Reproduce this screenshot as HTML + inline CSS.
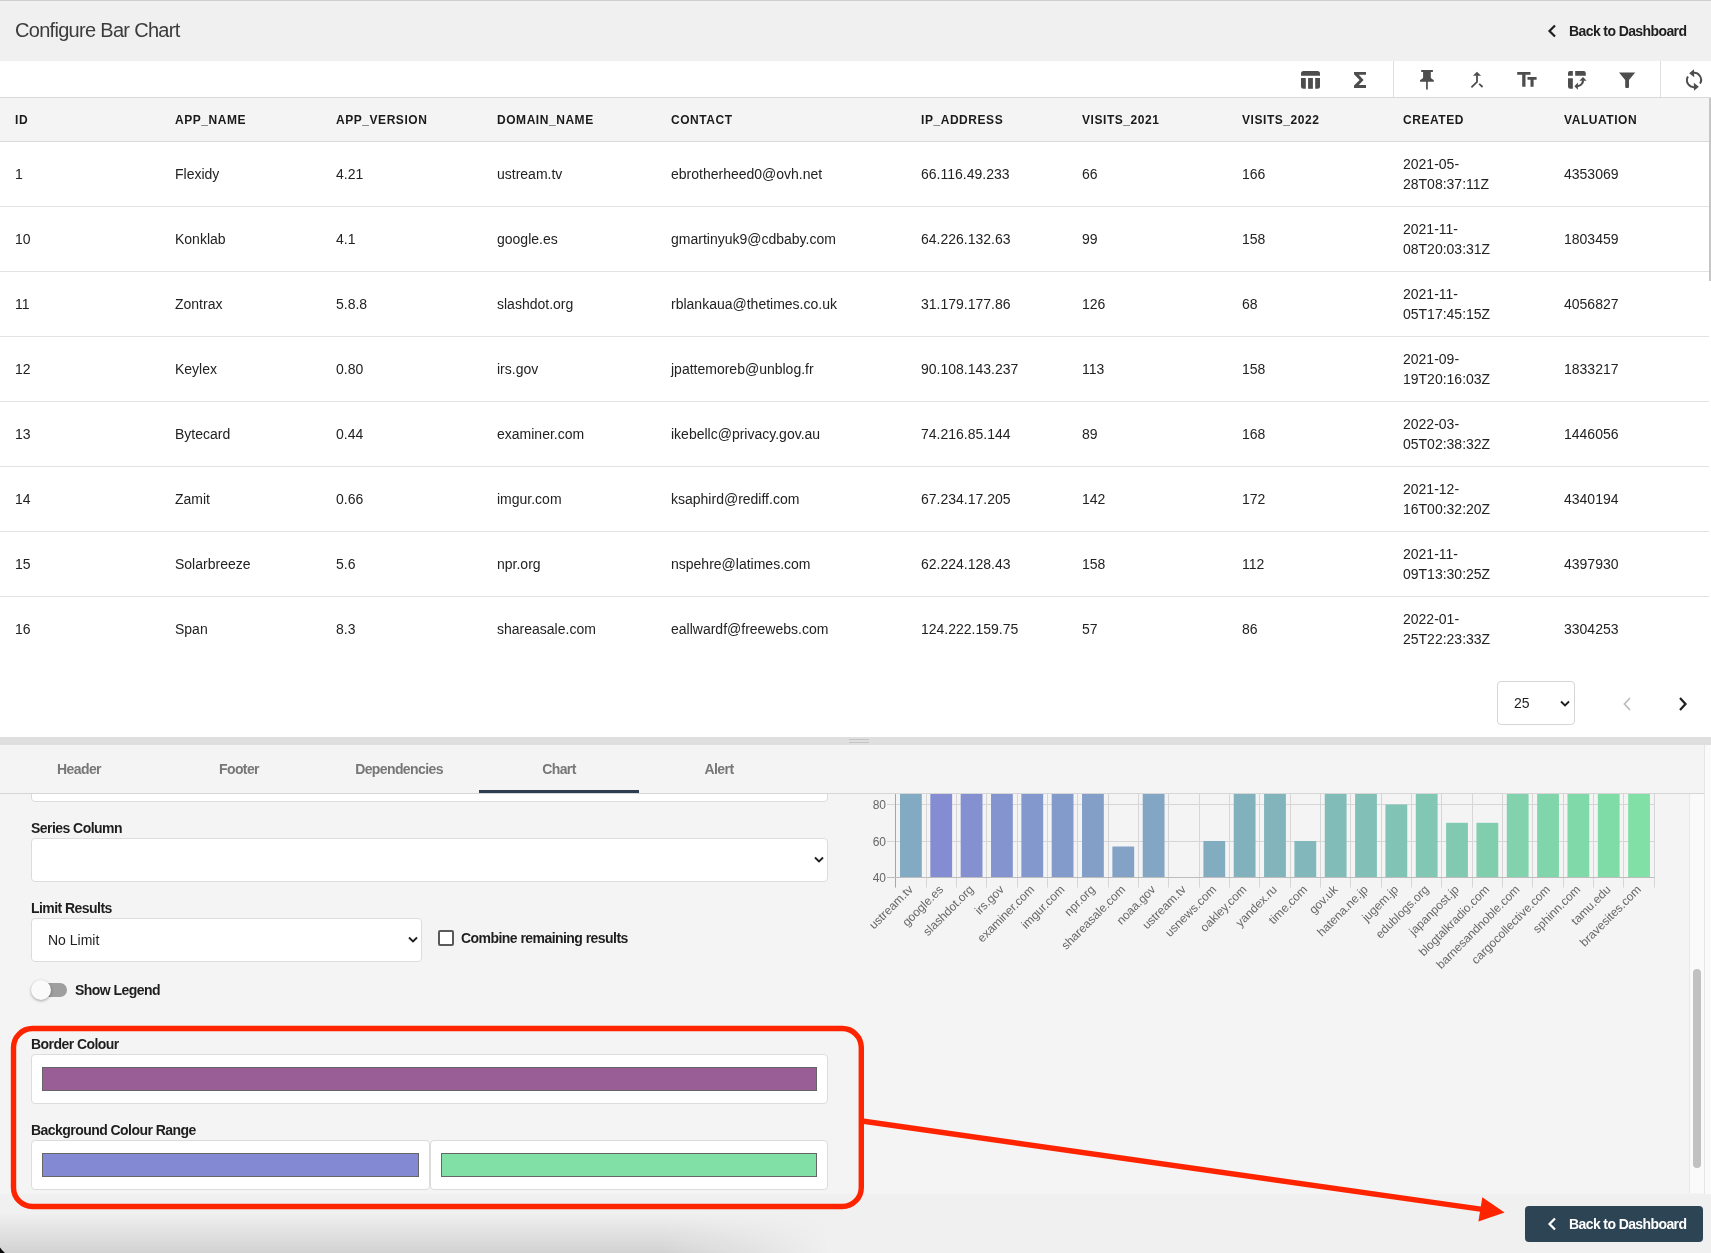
<!DOCTYPE html><html><head><meta charset="utf-8"><style>
*{box-sizing:border-box;margin:0;padding:0}
html,body{width:1711px;height:1253px;overflow:hidden;background:#f0f0f0;font-family:"Liberation Sans",sans-serif;color:#212121}
.a{position:absolute}
.nw{white-space:nowrap}
.th{font-size:12px;font-weight:bold;letter-spacing:0.55px;color:#1a1a1a;white-space:nowrap;line-height:14px}
.td{font-size:14px;color:#222;white-space:nowrap;line-height:20px}
.lbl{font-size:14px;font-weight:bold;letter-spacing:-0.55px;color:#1e1e1e;white-space:nowrap;line-height:16px}
.tab{font-size:14px;font-weight:bold;letter-spacing:-0.6px;color:#777;white-space:nowrap;line-height:16px;text-align:center;width:160px}
.box{background:#fff;border:1px solid #dcdcdc;border-radius:4px}
</style></head><body><div style="position:absolute;left:0;top:0;width:1711px;height:1253px;overflow:hidden;will-change:transform">
<div class="a" style="left:0;top:0;width:1711px;height:1px;background:#cfcfcf"></div>
<div class="a nw" style="left:15px;top:19px;font-size:20px;line-height:22px;letter-spacing:-0.7px;color:#3c3c3c">Configure Bar Chart</div>
<div class="a nw" style="left:1569px;top:23px;font-size:14px;line-height:16px;font-weight:bold;letter-spacing:-0.6px;color:#1e1e1e">Back to Dashboard</div>
<svg class="a" style="left:1546px;top:24px" width="12" height="14" viewBox="0 0 12 14"><path d="M9 1.5 L3.5 7 L9 12.5" fill="none" stroke="#1e1e1e" stroke-width="2.2"/></svg>
<div class="a" style="left:0;top:61px;width:1711px;height:37px;background:#fff;border-bottom:1px solid #d9d9d9"></div>
<div class="a" style="left:1393px;top:61px;width:1px;height:36px;background:#dedede"></div>
<div class="a" style="left:1660px;top:61px;width:1px;height:36px;background:#dedede"></div>
<svg class="a" style="left:1301px;top:71px" width="19" height="18" viewBox="0 0 19 18"><path d="M2.5 0 H16.5 A2.5 2.5 0 0 1 19 2.5 V4.7 H0 V2.5 A2.5 2.5 0 0 1 2.5 0 Z" fill="#4d4d4d"/><path d="M0 7 H4.8 V17.8 H2.5 A2.5 2.5 0 0 1 0 15.3 Z" fill="#4d4d4d"/><rect x="7.1" y="7" width="4.8" height="10.8" fill="#4d4d4d"/><path d="M14.2 7 H19 V15.3 A2.5 2.5 0 0 1 16.5 17.8 H14.2 Z" fill="#4d4d4d"/></svg>
<svg class="a" style="left:1354px;top:71px" width="13" height="18" viewBox="0 0 13 18"><path d="M0 0.9 H12 V3.8 H4.8 L9.6 8.9 L4.8 14.1 H12 V17 H0 V14.6 L5.6 8.9 L0 3.2 Z" fill="#4d4d4d"/></svg>
<svg class="a" style="left:1419px;top:69px" width="16" height="22" viewBox="0 0 16 22"><path d="M2.2 1.1 H13.9 V2.9 H11.8 V8.8 Q12.6 10.3 14.8 10.9 V12.8 H8.8 V20.5 H7.1 V12.8 H1.05 V10.9 Q3.3 10.3 4.1 8.8 V2.9 H2.2 Z" fill="#4d4d4d"/></svg>
<svg class="a" style="left:1470px;top:71px" width="14" height="18" viewBox="0 0 14 18"><path d="M7 4.2 V10.9 L1.4 16.3 M9.2 12.9 L12.6 16.0" fill="none" stroke="#4d4d4d" stroke-width="1.8"/><path d="M7 0.7 L11.1 4.8 H2.9 Z" fill="#4d4d4d"/></svg>
<svg class="a" style="left:1517px;top:71px" width="20" height="17" viewBox="0 0 20 17"><path d="M0.2 1.05 H13.5 V3.8 H8.5 V15.8 H5.2 V3.8 H0.2 Z" fill="#4d4d4d"/><path d="M10.5 6 H19.6 V8.8 H16.6 V15.8 H13.5 V8.8 H10.5 Z" fill="#4d4d4d"/></svg>
<svg class="a" style="left:1567px;top:70px" width="21" height="21" viewBox="0 0 21 21"><path d="M3 1.1 H5.85 V5.8 H1 V3.1 A2 2 0 0 1 3 1.1 Z" fill="#4d4d4d"/><path d="M1 8.2 H5.85 V18.7 H3.2 A2.2 2.2 0 0 1 1 16.5 Z" fill="#4d4d4d"/><path d="M8.2 1.1 H16.6 A2.2 2.2 0 0 1 18.8 3.3 V5.8 H8.2 Z" fill="#4d4d4d"/><path d="M10.2 16.1 A5.9 5.9 0 0 0 16.1 10.2" fill="none" stroke="#4d4d4d" stroke-width="2.1"/><path d="M16 7 L19.6 10.8 H12.4 Z" fill="#4d4d4d"/><path d="M7.4 16.2 L10.9 12.4 V19.8 Z" fill="#4d4d4d"/></svg>
<svg class="a" style="left:1619px;top:72px" width="17" height="17" viewBox="0 0 17 17"><path d="M0 0.5 H16.2 L10 8 V15 A1 1 0 0 1 9 16 H7.2 A1 1 0 0 1 6.2 15 V8 Z" fill="#4d4d4d"/></svg>
<svg class="a" style="left:1684px;top:67px" width="20" height="26" viewBox="0 0 20 26"><path d="M8.4 6.1 A7 7 0 0 1 16.06 16.5" fill="none" stroke="#4d4d4d" stroke-width="2"/><path d="M11.6 19.9 A7 7 0 0 1 3.94 9.5" fill="none" stroke="#4d4d4d" stroke-width="2"/><path d="M5.2 6.3 L10 2.2 L10.2 10.2 Z" fill="#4d4d4d"/><path d="M14.8 19.7 L10 23.8 L9.8 15.8 Z" fill="#4d4d4d"/></svg>
<div class="a" style="left:0;top:98px;width:1711px;height:639px;background:#fff"></div>
<div class="a" style="left:0;top:98px;width:1709px;height:44px;background:#f4f4f4;border-bottom:1px solid #dadada"></div>
<div class="a" style="left:1709px;top:98px;width:2px;height:183px;background:#c6c6c6"></div>
<div class="a th" style="left:15px;top:113px">ID</div>
<div class="a th" style="left:175px;top:113px">APP_NAME</div>
<div class="a th" style="left:336px;top:113px">APP_VERSION</div>
<div class="a th" style="left:497px;top:113px">DOMAIN_NAME</div>
<div class="a th" style="left:671px;top:113px">CONTACT</div>
<div class="a th" style="left:921px;top:113px">IP_ADDRESS</div>
<div class="a th" style="left:1082px;top:113px">VISITS_2021</div>
<div class="a th" style="left:1242px;top:113px">VISITS_2022</div>
<div class="a th" style="left:1403px;top:113px">CREATED</div>
<div class="a th" style="left:1564px;top:113px">VALUATION</div>
<div class="a" style="left:0;top:206px;width:1709px;height:1px;background:#e3e3e3"></div>
<div class="a td" style="left:15px;top:164px">1</div>
<div class="a td" style="left:175px;top:164px">Flexidy</div>
<div class="a td" style="left:336px;top:164px">4.21</div>
<div class="a td" style="left:497px;top:164px">ustream.tv</div>
<div class="a td" style="left:671px;top:164px">ebrotherheed0@ovh.net</div>
<div class="a td" style="left:921px;top:164px">66.116.49.233</div>
<div class="a td" style="left:1082px;top:164px">66</div>
<div class="a td" style="left:1242px;top:164px">166</div>
<div class="a td" style="left:1403px;top:154px">2021-05-<br>28T08:37:11Z</div>
<div class="a td" style="left:1564px;top:164px">4353069</div>
<div class="a" style="left:0;top:271px;width:1709px;height:1px;background:#e3e3e3"></div>
<div class="a td" style="left:15px;top:229px">10</div>
<div class="a td" style="left:175px;top:229px">Konklab</div>
<div class="a td" style="left:336px;top:229px">4.1</div>
<div class="a td" style="left:497px;top:229px">google.es</div>
<div class="a td" style="left:671px;top:229px">gmartinyuk9@cdbaby.com</div>
<div class="a td" style="left:921px;top:229px">64.226.132.63</div>
<div class="a td" style="left:1082px;top:229px">99</div>
<div class="a td" style="left:1242px;top:229px">158</div>
<div class="a td" style="left:1403px;top:219px">2021-11-<br>08T20:03:31Z</div>
<div class="a td" style="left:1564px;top:229px">1803459</div>
<div class="a" style="left:0;top:336px;width:1709px;height:1px;background:#e3e3e3"></div>
<div class="a td" style="left:15px;top:294px">11</div>
<div class="a td" style="left:175px;top:294px">Zontrax</div>
<div class="a td" style="left:336px;top:294px">5.8.8</div>
<div class="a td" style="left:497px;top:294px">slashdot.org</div>
<div class="a td" style="left:671px;top:294px">rblankaua@thetimes.co.uk</div>
<div class="a td" style="left:921px;top:294px">31.179.177.86</div>
<div class="a td" style="left:1082px;top:294px">126</div>
<div class="a td" style="left:1242px;top:294px">68</div>
<div class="a td" style="left:1403px;top:284px">2021-11-<br>05T17:45:15Z</div>
<div class="a td" style="left:1564px;top:294px">4056827</div>
<div class="a" style="left:0;top:401px;width:1709px;height:1px;background:#e3e3e3"></div>
<div class="a td" style="left:15px;top:359px">12</div>
<div class="a td" style="left:175px;top:359px">Keylex</div>
<div class="a td" style="left:336px;top:359px">0.80</div>
<div class="a td" style="left:497px;top:359px">irs.gov</div>
<div class="a td" style="left:671px;top:359px">jpattemoreb@unblog.fr</div>
<div class="a td" style="left:921px;top:359px">90.108.143.237</div>
<div class="a td" style="left:1082px;top:359px">113</div>
<div class="a td" style="left:1242px;top:359px">158</div>
<div class="a td" style="left:1403px;top:349px">2021-09-<br>19T20:16:03Z</div>
<div class="a td" style="left:1564px;top:359px">1833217</div>
<div class="a" style="left:0;top:466px;width:1709px;height:1px;background:#e3e3e3"></div>
<div class="a td" style="left:15px;top:424px">13</div>
<div class="a td" style="left:175px;top:424px">Bytecard</div>
<div class="a td" style="left:336px;top:424px">0.44</div>
<div class="a td" style="left:497px;top:424px">examiner.com</div>
<div class="a td" style="left:671px;top:424px">ikebellc@privacy.gov.au</div>
<div class="a td" style="left:921px;top:424px">74.216.85.144</div>
<div class="a td" style="left:1082px;top:424px">89</div>
<div class="a td" style="left:1242px;top:424px">168</div>
<div class="a td" style="left:1403px;top:414px">2022-03-<br>05T02:38:32Z</div>
<div class="a td" style="left:1564px;top:424px">1446056</div>
<div class="a" style="left:0;top:531px;width:1709px;height:1px;background:#e3e3e3"></div>
<div class="a td" style="left:15px;top:489px">14</div>
<div class="a td" style="left:175px;top:489px">Zamit</div>
<div class="a td" style="left:336px;top:489px">0.66</div>
<div class="a td" style="left:497px;top:489px">imgur.com</div>
<div class="a td" style="left:671px;top:489px">ksaphird@rediff.com</div>
<div class="a td" style="left:921px;top:489px">67.234.17.205</div>
<div class="a td" style="left:1082px;top:489px">142</div>
<div class="a td" style="left:1242px;top:489px">172</div>
<div class="a td" style="left:1403px;top:479px">2021-12-<br>16T00:32:20Z</div>
<div class="a td" style="left:1564px;top:489px">4340194</div>
<div class="a" style="left:0;top:596px;width:1709px;height:1px;background:#e3e3e3"></div>
<div class="a td" style="left:15px;top:554px">15</div>
<div class="a td" style="left:175px;top:554px">Solarbreeze</div>
<div class="a td" style="left:336px;top:554px">5.6</div>
<div class="a td" style="left:497px;top:554px">npr.org</div>
<div class="a td" style="left:671px;top:554px">nspehre@latimes.com</div>
<div class="a td" style="left:921px;top:554px">62.224.128.43</div>
<div class="a td" style="left:1082px;top:554px">158</div>
<div class="a td" style="left:1242px;top:554px">112</div>
<div class="a td" style="left:1403px;top:544px">2021-11-<br>09T13:30:25Z</div>
<div class="a td" style="left:1564px;top:554px">4397930</div>
<div class="a td" style="left:15px;top:619px">16</div>
<div class="a td" style="left:175px;top:619px">Span</div>
<div class="a td" style="left:336px;top:619px">8.3</div>
<div class="a td" style="left:497px;top:619px">shareasale.com</div>
<div class="a td" style="left:671px;top:619px">eallwardf@freewebs.com</div>
<div class="a td" style="left:921px;top:619px">124.222.159.75</div>
<div class="a td" style="left:1082px;top:619px">57</div>
<div class="a td" style="left:1242px;top:619px">86</div>
<div class="a td" style="left:1403px;top:609px">2022-01-<br>25T22:23:33Z</div>
<div class="a td" style="left:1564px;top:619px">3304253</div>
<div class="a" style="left:1497px;top:681px;width:78px;height:44px;border:1px solid #d5d5d5;border-radius:4px;background:#fff"></div>
<div class="a td" style="left:1514px;top:693px;color:#1e1e1e">25</div>
<svg class="a" style="left:1560px;top:700px" width="10" height="8" viewBox="0 0 10 8"><path d="M1 1.5 L5 5.5 L9 1.5" fill="none" stroke="#1e1e1e" stroke-width="1.8"/></svg>
<svg class="a" style="left:1622px;top:697px" width="10" height="14" viewBox="0 0 10 14"><path d="M8 1 L2.5 7 L8 13" fill="none" stroke="#bdbdbd" stroke-width="1.8"/></svg>
<svg class="a" style="left:1678px;top:697px" width="10" height="14" viewBox="0 0 10 14"><path d="M2 1 L7.5 7 L2 13" fill="none" stroke="#1e1e1e" stroke-width="2.2"/></svg>
<div class="a" style="left:0;top:737px;width:1711px;height:8px;background:#dfdfdf"></div>
<div class="a" style="left:849px;top:739px;width:20px;height:1px;background:#c4c4c4"></div>
<div class="a" style="left:849px;top:742px;width:20px;height:1px;background:#c4c4c4"></div>
<div class="a" style="left:0;top:745px;width:1705px;height:449px;background:#f4f4f4"></div>
<div class="a" style="left:1705px;top:745px;width:6px;height:449px;background:#fafafa"></div>
<div class="a" style="left:1704px;top:745px;width:1px;height:449px;background:#e6e6e6"></div>
<div class="a" style="left:0;top:794px;width:1689px;height:399px;overflow:hidden">
<div class="a box" style="left:31px;top:-30px;width:797px;height:38px"></div>
<div class="a lbl" style="left:31px;top:26px">Series Column</div>
<div class="a box" style="left:31px;top:44px;width:797px;height:44px"></div>
<svg class="a" style="left:814px;top:62px" width="10" height="8" viewBox="0 0 10 8"><path d="M1 1.5 L5 5.5 L9 1.5" fill="none" stroke="#1e1e1e" stroke-width="1.8"/></svg>
<div class="a lbl" style="left:31px;top:106px">Limit Results</div>
<div class="a box" style="left:31px;top:124px;width:391px;height:44px"></div>
<div class="a td" style="left:48px;top:136px;color:#1e1e1e">No Limit</div>
<svg class="a" style="left:408px;top:142px" width="10" height="8" viewBox="0 0 10 8"><path d="M1 1.5 L5 5.5 L9 1.5" fill="none" stroke="#1e1e1e" stroke-width="1.8"/></svg>
<div class="a" style="left:438px;top:136px;width:16px;height:16px;border:2px solid #5a5a5a;border-radius:2px;background:#fff"></div>
<div class="a lbl" style="left:461px;top:136px">Combine remaining results</div>
<div class="a" style="left:33px;top:189px;width:34px;height:14px;border-radius:7px;background:#9e9e9e"></div>
<div class="a" style="left:31px;top:186px;width:20px;height:20px;border-radius:10px;background:#fafafa;box-shadow:0 1px 3px rgba(0,0,0,0.35)"></div>
<div class="a lbl" style="left:75px;top:188px">Show Legend</div>
<div class="a lbl" style="left:31px;top:242px">Border Colour</div>
<div class="a box" style="left:31px;top:260px;width:797px;height:50px"></div>
<div class="a" style="left:42px;top:273px;width:775px;height:24px;background:#9a5e97;border:1px solid #666"></div>
<div class="a lbl" style="left:31px;top:328px">Background Colour Range</div>
<div class="a box" style="left:31px;top:346px;width:399px;height:50px"></div>
<div class="a" style="left:42px;top:359px;width:377px;height:24px;background:#8489d3;border:1px solid #666"></div>
<div class="a box" style="left:430px;top:346px;width:398px;height:50px"></div>
<div class="a" style="left:441px;top:359px;width:376px;height:24px;background:#80e0a5;border:1px solid #666"></div>
<svg class="a" style="left:0;top:0" width="1689" height="399" viewBox="0 0 1689 399">
<line x1="887" y1="10.5" x2="1654.5" y2="10.5" stroke="#d6d6d6" stroke-width="1"/>
<line x1="887" y1="47.5" x2="1654.5" y2="47.5" stroke="#d6d6d6" stroke-width="1"/>
<line x1="926.5" y1="0" x2="926.5" y2="93.6" stroke="#d6d6d6" stroke-width="1"/>
<line x1="956.5" y1="0" x2="956.5" y2="93.6" stroke="#d6d6d6" stroke-width="1"/>
<line x1="986.5" y1="0" x2="986.5" y2="93.6" stroke="#d6d6d6" stroke-width="1"/>
<line x1="1017.5" y1="0" x2="1017.5" y2="93.6" stroke="#d6d6d6" stroke-width="1"/>
<line x1="1047.5" y1="0" x2="1047.5" y2="93.6" stroke="#d6d6d6" stroke-width="1"/>
<line x1="1077.5" y1="0" x2="1077.5" y2="93.6" stroke="#d6d6d6" stroke-width="1"/>
<line x1="1108.5" y1="0" x2="1108.5" y2="93.6" stroke="#d6d6d6" stroke-width="1"/>
<line x1="1138.5" y1="0" x2="1138.5" y2="93.6" stroke="#d6d6d6" stroke-width="1"/>
<line x1="1168.5" y1="0" x2="1168.5" y2="93.6" stroke="#d6d6d6" stroke-width="1"/>
<line x1="1199.5" y1="0" x2="1199.5" y2="93.6" stroke="#d6d6d6" stroke-width="1"/>
<line x1="1229.5" y1="0" x2="1229.5" y2="93.6" stroke="#d6d6d6" stroke-width="1"/>
<line x1="1259.5" y1="0" x2="1259.5" y2="93.6" stroke="#d6d6d6" stroke-width="1"/>
<line x1="1290.5" y1="0" x2="1290.5" y2="93.6" stroke="#d6d6d6" stroke-width="1"/>
<line x1="1320.5" y1="0" x2="1320.5" y2="93.6" stroke="#d6d6d6" stroke-width="1"/>
<line x1="1350.5" y1="0" x2="1350.5" y2="93.6" stroke="#d6d6d6" stroke-width="1"/>
<line x1="1381.5" y1="0" x2="1381.5" y2="93.6" stroke="#d6d6d6" stroke-width="1"/>
<line x1="1411.5" y1="0" x2="1411.5" y2="93.6" stroke="#d6d6d6" stroke-width="1"/>
<line x1="1441.5" y1="0" x2="1441.5" y2="93.6" stroke="#d6d6d6" stroke-width="1"/>
<line x1="1472.5" y1="0" x2="1472.5" y2="93.6" stroke="#d6d6d6" stroke-width="1"/>
<line x1="1502.5" y1="0" x2="1502.5" y2="93.6" stroke="#d6d6d6" stroke-width="1"/>
<line x1="1532.5" y1="0" x2="1532.5" y2="93.6" stroke="#d6d6d6" stroke-width="1"/>
<line x1="1563.5" y1="0" x2="1563.5" y2="93.6" stroke="#d6d6d6" stroke-width="1"/>
<line x1="1593.5" y1="0" x2="1593.5" y2="93.6" stroke="#d6d6d6" stroke-width="1"/>
<line x1="1623.5" y1="0" x2="1623.5" y2="93.6" stroke="#d6d6d6" stroke-width="1"/>
<line x1="1654.5" y1="0" x2="1654.5" y2="93.6" stroke="#d6d6d6" stroke-width="1"/>
<rect x="900.00" y="0.0" width="21.8" height="83.5" fill="#82aac2"/>
<rect x="930.34" y="0.0" width="21.8" height="83.5" fill="#848dd2"/>
<rect x="960.68" y="0.0" width="21.8" height="83.5" fill="#8490d0"/>
<rect x="991.02" y="0.0" width="21.8" height="83.5" fill="#8494ce"/>
<rect x="1021.36" y="0.0" width="21.8" height="83.5" fill="#8398cc"/>
<rect x="1051.70" y="0.0" width="21.8" height="83.5" fill="#839bca"/>
<rect x="1082.04" y="0.0" width="21.8" height="83.5" fill="#839fc8"/>
<rect x="1112.38" y="52.5" width="21.8" height="31.0" fill="#83a2c6"/>
<rect x="1142.72" y="0.0" width="21.8" height="83.5" fill="#83a6c4"/>
<rect x="1203.40" y="47.0" width="21.8" height="36.5" fill="#82adc0"/>
<rect x="1233.74" y="0.0" width="21.8" height="83.5" fill="#82b1be"/>
<rect x="1264.08" y="0.0" width="21.8" height="83.5" fill="#82b4bc"/>
<rect x="1294.42" y="47.0" width="21.8" height="36.5" fill="#82b8bb"/>
<rect x="1324.76" y="0.0" width="21.8" height="83.5" fill="#82bcb9"/>
<rect x="1355.10" y="0.0" width="21.8" height="83.5" fill="#82bfb7"/>
<rect x="1385.44" y="10.5" width="21.8" height="73.0" fill="#81c3b5"/>
<rect x="1415.78" y="0.0" width="21.8" height="83.5" fill="#81c7b3"/>
<rect x="1446.12" y="28.8" width="21.8" height="54.8" fill="#81cab1"/>
<rect x="1476.46" y="28.8" width="21.8" height="54.8" fill="#81ceaf"/>
<rect x="1506.80" y="0.0" width="21.8" height="83.5" fill="#81d2ad"/>
<rect x="1537.14" y="0.0" width="21.8" height="83.5" fill="#80d5ab"/>
<rect x="1567.48" y="0.0" width="21.8" height="83.5" fill="#80d9a9"/>
<rect x="1597.82" y="0.0" width="21.8" height="83.5" fill="#80dca7"/>
<rect x="1628.16" y="0.0" width="21.8" height="83.5" fill="#80e0a5"/>
<line x1="895.5" y1="0" x2="895.5" y2="93.6" stroke="#a6a6a6" stroke-width="1"/>
<line x1="887" y1="83.5" x2="1654.5" y2="83.5" stroke="#bdbdbd" stroke-width="1"/>
<text x="886" y="14.8" text-anchor="end" font-family="Liberation Sans" font-size="12" fill="#666">80</text>
<text x="886" y="51.8" text-anchor="end" font-family="Liberation Sans" font-size="12" fill="#666">60</text>
<text x="886" y="87.8" text-anchor="end" font-family="Liberation Sans" font-size="12" fill="#666">40</text>
<text transform="translate(911.4,94) rotate(-45)" text-anchor="end" dominant-baseline="middle" font-family="Liberation Sans" font-size="12" fill="#666">ustream.tv</text>
<text transform="translate(941.7,94) rotate(-45)" text-anchor="end" dominant-baseline="middle" font-family="Liberation Sans" font-size="12" fill="#666">google.es</text>
<text transform="translate(972.1,94) rotate(-45)" text-anchor="end" dominant-baseline="middle" font-family="Liberation Sans" font-size="12" fill="#666">slashdot.org</text>
<text transform="translate(1002.4,94) rotate(-45)" text-anchor="end" dominant-baseline="middle" font-family="Liberation Sans" font-size="12" fill="#666">irs.gov</text>
<text transform="translate(1032.8,94) rotate(-45)" text-anchor="end" dominant-baseline="middle" font-family="Liberation Sans" font-size="12" fill="#666">examiner.com</text>
<text transform="translate(1063.1,94) rotate(-45)" text-anchor="end" dominant-baseline="middle" font-family="Liberation Sans" font-size="12" fill="#666">imgur.com</text>
<text transform="translate(1093.4,94) rotate(-45)" text-anchor="end" dominant-baseline="middle" font-family="Liberation Sans" font-size="12" fill="#666">npr.org</text>
<text transform="translate(1123.8,94) rotate(-45)" text-anchor="end" dominant-baseline="middle" font-family="Liberation Sans" font-size="12" fill="#666">shareasale.com</text>
<text transform="translate(1154.1,94) rotate(-45)" text-anchor="end" dominant-baseline="middle" font-family="Liberation Sans" font-size="12" fill="#666">noaa.gov</text>
<text transform="translate(1184.5,94) rotate(-45)" text-anchor="end" dominant-baseline="middle" font-family="Liberation Sans" font-size="12" fill="#666">ustream.tv</text>
<text transform="translate(1214.8,94) rotate(-45)" text-anchor="end" dominant-baseline="middle" font-family="Liberation Sans" font-size="12" fill="#666">usnews.com</text>
<text transform="translate(1245.1,94) rotate(-45)" text-anchor="end" dominant-baseline="middle" font-family="Liberation Sans" font-size="12" fill="#666">oakley.com</text>
<text transform="translate(1275.5,94) rotate(-45)" text-anchor="end" dominant-baseline="middle" font-family="Liberation Sans" font-size="12" fill="#666">yandex.ru</text>
<text transform="translate(1305.8,94) rotate(-45)" text-anchor="end" dominant-baseline="middle" font-family="Liberation Sans" font-size="12" fill="#666">time.com</text>
<text transform="translate(1336.2,94) rotate(-45)" text-anchor="end" dominant-baseline="middle" font-family="Liberation Sans" font-size="12" fill="#666">gov.uk</text>
<text transform="translate(1366.5,94) rotate(-45)" text-anchor="end" dominant-baseline="middle" font-family="Liberation Sans" font-size="12" fill="#666">hatena.ne.jp</text>
<text transform="translate(1396.8,94) rotate(-45)" text-anchor="end" dominant-baseline="middle" font-family="Liberation Sans" font-size="12" fill="#666">jugem.jp</text>
<text transform="translate(1427.2,94) rotate(-45)" text-anchor="end" dominant-baseline="middle" font-family="Liberation Sans" font-size="12" fill="#666">edublogs.org</text>
<text transform="translate(1457.5,94) rotate(-45)" text-anchor="end" dominant-baseline="middle" font-family="Liberation Sans" font-size="12" fill="#666">japanpost.jp</text>
<text transform="translate(1487.9,94) rotate(-45)" text-anchor="end" dominant-baseline="middle" font-family="Liberation Sans" font-size="12" fill="#666">blogtalkradio.com</text>
<text transform="translate(1518.2,94) rotate(-45)" text-anchor="end" dominant-baseline="middle" font-family="Liberation Sans" font-size="12" fill="#666">barnesandnoble.com</text>
<text transform="translate(1548.5,94) rotate(-45)" text-anchor="end" dominant-baseline="middle" font-family="Liberation Sans" font-size="12" fill="#666">cargocollective.com</text>
<text transform="translate(1578.9,94) rotate(-45)" text-anchor="end" dominant-baseline="middle" font-family="Liberation Sans" font-size="12" fill="#666">sphinn.com</text>
<text transform="translate(1609.2,94) rotate(-45)" text-anchor="end" dominant-baseline="middle" font-family="Liberation Sans" font-size="12" fill="#666">tamu.edu</text>
<text transform="translate(1639.6,94) rotate(-45)" text-anchor="end" dominant-baseline="middle" font-family="Liberation Sans" font-size="12" fill="#666">bravesites.com</text>
</svg>
</div>
<div class="a" style="left:1689px;top:794px;width:1px;height:399px;background:#e8e8e8"></div>
<div class="a" style="left:1690px;top:794px;width:14px;height:399px;background:#fafafa"></div>
<div class="a" style="left:1693px;top:969px;width:8px;height:199px;border-radius:4px;background:#c1c1c1"></div>
<div class="a" style="left:0;top:793px;width:1704px;height:1px;background:#d6d6d6"></div>
<div class="a tab" style="left:-1px;top:761px">Header</div>
<div class="a tab" style="left:159px;top:761px">Footer</div>
<div class="a tab" style="left:319px;top:761px">Dependencies</div>
<div class="a tab" style="left:479px;top:761px">Chart</div>
<div class="a tab" style="left:639px;top:761px">Alert</div>
<div class="a" style="left:479px;top:790px;width:160px;height:3px;background:#2c3e50"></div>
<div class="a" style="left:0;top:1194px;width:1711px;height:59px;background:#f0f0f0"></div>
<div class="a" style="left:0;top:1200px;width:900px;height:53px;background:linear-gradient(rgba(0,0,0,0) 0%,rgba(0,0,0,0) 25%,rgba(0,0,0,0.12) 100%);-webkit-mask-image:linear-gradient(90deg,#000 0,#000 660px,transparent 830px);mask-image:linear-gradient(90deg,#000 0,#000 660px,transparent 830px)"></div>
<svg class="a" style="left:0;top:1246px" width="8" height="7" viewBox="0 0 8 7"><path d="M0 1.5 Q2 4.5 5 7 H0 Z" fill="#0a0a0a"/></svg>
<div class="a" style="left:1525px;top:1206px;width:178px;height:36px;border-radius:4px;background:#2d4454"></div>
<div class="a nw" style="left:1569px;top:1216px;font-size:14px;line-height:16px;font-weight:bold;letter-spacing:-0.6px;color:#fff">Back to Dashboard</div>
<svg class="a" style="left:1546px;top:1217px" width="12" height="14" viewBox="0 0 12 14"><path d="M9 1.5 L3.5 7 L9 12.5" fill="none" stroke="#fff" stroke-width="2.2"/></svg>
<svg class="a" style="left:0;top:0" width="1711" height="1253" viewBox="0 0 1711 1253"><rect x="13.5" y="1028.5" width="847.8" height="178" rx="19" ry="19" fill="none" stroke="#fe2400" stroke-width="5.4"/><line x1="862" y1="1121" x2="1484" y2="1209.7" stroke="#fe2400" stroke-width="5.4"/><path d="M1504.6 1212.6 L1478.4 1221.4 L1482.3 1197.3 Z" fill="#fe2400"/></svg>
</div></body></html>
